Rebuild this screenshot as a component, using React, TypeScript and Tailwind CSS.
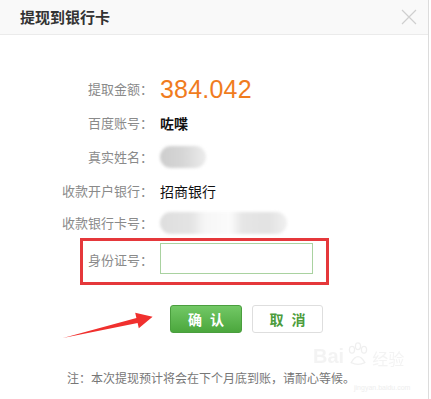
import React from "react";

const cjk = { fontFamily: '"Noto Sans CJK SC", "Noto Sans", sans-serif' };

function Row({ label, children, h = 34 }: { label: string; children?: React.ReactNode; h?: number }) {
  return (
    <div className="flex items-center" style={{ height: h }}>
      <div className="w-[153px] text-right text-[13px] text-[#8a8a8a] shrink-0">{label}</div>
      <div className="ml-[7px] flex items-center">{children}</div>
    </div>
  );
}

export default function App() {
  return (
    <div className="relative w-[431px] h-[399px] bg-white overflow-hidden" style={cjk}>
      <div className="w-[429px] h-[399px] border-r border-[#dcdcdc] flex flex-col">
        <div className="h-[35px] bg-[#f9f9f9] border-b border-[#ebebeb] flex items-center justify-between pl-[20px] pr-[10px] shrink-0">
          <span className="text-[15px] font-bold text-[#333]">提现到银行卡</span>
          <svg width="16" height="16" viewBox="0 0 16 16" className="mr-[1px]">
            <path d="M1 1 L15 15 M15 1 L1 15" stroke="#cfcfcf" strokeWidth="1.2" fill="none" />
          </svg>
        </div>
        <div className="pt-[37px] flex flex-col">
          <Row label="提取金额：">
            <span className="text-[25px] leading-none text-[#f07c1e] tracking-[0.2px]" style={{ fontFamily: '"Liberation Sans", Arial, sans-serif' }}>
              384.042
            </span>
          </Row>
          <Row label="百度账号：">
            <span className="text-[14px] font-bold text-[#111]">咗喋</span>
          </Row>
          <Row label="真实姓名：">
            <div className="w-[46px] h-[22px] rounded-full bg-gradient-to-r from-[#cdcdcd] via-[#d6d6d6] to-[#ececec] blur-[1.5px]" />
          </Row>
          <Row label="收款开户银行：">
            <span className="text-[14px] text-[#111]">招商银行</span>
          </Row>
          <Row label="收款银行卡号：" h={30}>
            <div
              className="w-[127px] h-[22px] rounded-full blur-[1.5px]"
              style={{ background: "linear-gradient(to right,#dedede 0%,#e4e4e4 25%,#f6f6f6 35%,#fbfbfb 55%,#e6e6e6 65%,#e2e2e2 85%,#f0f0f0 100%)" }}
            />
          </Row>
          <div className="ml-[80px] w-[249px] h-[47px] border-[3px] border-[#e5383b] flex items-start">
            <div className="w-[70px] text-right text-[13px] text-[#8a8a8a] h-[31px] leading-[31px] mt-[3px]">身份证号：</div>
            <div className="ml-[7px] mt-[2px] w-[153px] h-[31px] border border-[#a9d2a0] bg-white" />
          </div>
          <div className="flex mt-[20px] ml-[170px] gap-[10px]">
            <button className="w-[72px] h-[28px] rounded-[3px] bg-gradient-to-b from-[#72c865] to-[#4ba73d] border border-[#4a9e3e] text-white text-[14px] font-bold tracking-[8px] pl-[8px]">
              确认
            </button>
            <button className="w-[71px] h-[28px] rounded-[3px] bg-white border border-[#dedede] text-[#4c9c3c] text-[14px] font-bold tracking-[8px] pl-[8px]">
              取消
            </button>
          </div>
          <div className="mt-[36px] ml-[67px] text-[12px] text-[#777]">注：本次提现预计将会在下个月底到账，请耐心等候。</div>
        </div>
      </div>
      <svg className="absolute left-0 top-0 pointer-events-none" width="431" height="399">
        <polygon
          points="63,338 136.4,318.1 135.2,312.7 152.6,316.8 138.8,328.3 137.6,322.9"
          fill="#f0302e"
        />
      </svg>
      <div className="absolute left-[313px] top-[342px] pointer-events-none flex items-end gap-[2px] opacity-60">
        <span className="text-[20px] font-bold text-[#ececec] leading-none" style={{ fontFamily: '"Liberation Sans", sans-serif' }}>Bai</span>
        <svg width="24" height="24" viewBox="0 0 26 28">
          <g fill="none" stroke="#e6e6e6" strokeWidth="1.5">
            <ellipse cx="6" cy="9" rx="3" ry="4" />
            <ellipse cx="13" cy="5" rx="3" ry="4" />
            <ellipse cx="20" cy="9" rx="3" ry="4" />
            <path d="M5 24 Q13 10 21 24 Q13 28 5 24 Z" />
          </g>
        </svg>
        <span className="text-[16px] text-[#ececec] leading-none">经验</span>
      </div>
      <div className="absolute left-[354px] top-[383px] text-[7px] text-[#eeeeee] pointer-events-none" style={{ fontFamily: '"Liberation Sans", sans-serif' }}>
        jingyan.baidu.com
      </div>
    </div>
  );
}
